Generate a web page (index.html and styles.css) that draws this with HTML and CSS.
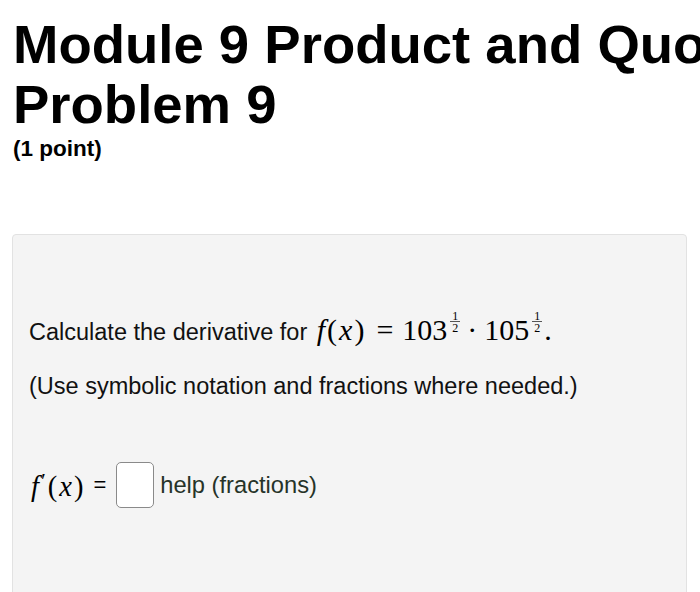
FILE: index.html
```html
<!DOCTYPE html>
<html>
<head>
<meta charset="utf-8">
<link rel="stylesheet" href="styles.css">
</head>
<body>
<header class="page-head">
  <h1 class="title"><span class="title-line">Module 9 Product and Quotient Rules</span><span class="title-line">Problem 9</span></h1>
  <div class="points">(1 point)</div>
</header>
<section class="problem">
  <p class="line line-first">Calculate the derivative for <span class="math"><i class="mi">f</i><span class="mo">(</span><i class="mi">x</i><span class="mo">)</span><span class="rel">=</span>103<span class="frac"><span class="num">1</span><span class="den">2</span></span><span class="dot">·</span>105<span class="frac"><span class="num">1</span><span class="den">2</span></span>.</span></p>
  <p class="line">(Use symbolic notation and fractions where needed.)</p>
  <div class="answer-row">
    <span class="math lhs"><i class="mi">f</i><span class="prime">′</span><span class="mo">(</span><i class="mi">x</i><span class="mo">)</span></span>
    <span class="eq">=</span>
    <span class="answer-box"></span>
    <span class="help">help (fractions)</span>
  </div>
</section>
</body>
</html>
```
FILE: styles.css
```css
html, body {
  margin: 0;
  padding: 0;
  background: #ffffff;
  overflow: hidden;
}
body {
  width: 700px;
  height: 592px;
  font-family: "Liberation Sans", Arial, sans-serif;
  color: #000;
}
.page-head {
  padding: 15px 0 0 13px;
  overflow: hidden;
}
.title {
  margin: 0;
  font-size: 54.5px;
  line-height: 60px;
  font-weight: bold;
}
.title-line {
  display: block;
  white-space: nowrap;
}
.points {
  margin-top: 1px;
  font-size: 22.5px;
  font-weight: bold;
  line-height: 26px;
}
.problem {
  margin: 72px 13px 0 12px;
  height: 400px;
  background: #f4f4f4;
  border: 1px solid #e2e2e2;
  border-radius: 4px;
  padding: 76px 16px 0 16px;
  box-sizing: border-box;
}
.line {
  margin: 0 0 28px 0;
  font-size: 23.5px;
  line-height: 28px;
  height: 28px;
  color: #111;
  white-space: nowrap;
}
.line-first {
  margin-bottom: 33px;
}
.math {
  font-family: "Liberation Serif", "DejaVu Serif", serif;
  font-size: 30px;
  color: #000;
}
.line .math {
  margin-left: 3px;
}
.mi {
  font-style: italic;
}
.mo {
  padding: 0 2px;
}
.rel {
  padding: 0 9px 0 10px;
}
.dot {
  padding: 0 7px 0 5px;
}
.frac {
  display: inline-flex;
  flex-direction: column;
  align-items: center;
  vertical-align: 20px;
  font-size: 12px;
  line-height: 10px;
  margin-left: 3px;
  margin-right: 2px;
}
.frac .num {
  border-bottom: 1px solid #555;
  padding: 0 2px 0;
}
.frac .den {
  padding-top: 1px;
}
.answer-row {
  display: flex;
  align-items: center;
  margin-top: 62px;
}
.lhs {
  font-size: 28.5px;
  margin-left: 2px;
}
.prime {
  font-size: 22px;
  vertical-align: 8px;
  margin-left: 2px;
}
.eq {
  font-size: 22px;
  margin: 0 10px 0 8px;
}
.answer-box {
  display: inline-block;
  width: 38px;
  height: 46px;
  border: 1px solid #8a8a8a;
  border-radius: 5px;
  background: #ffffff;
  box-sizing: border-box;
}
.help {
  font-size: 23.7px;
  margin-left: 6px;
  color: #263328;
}
```
